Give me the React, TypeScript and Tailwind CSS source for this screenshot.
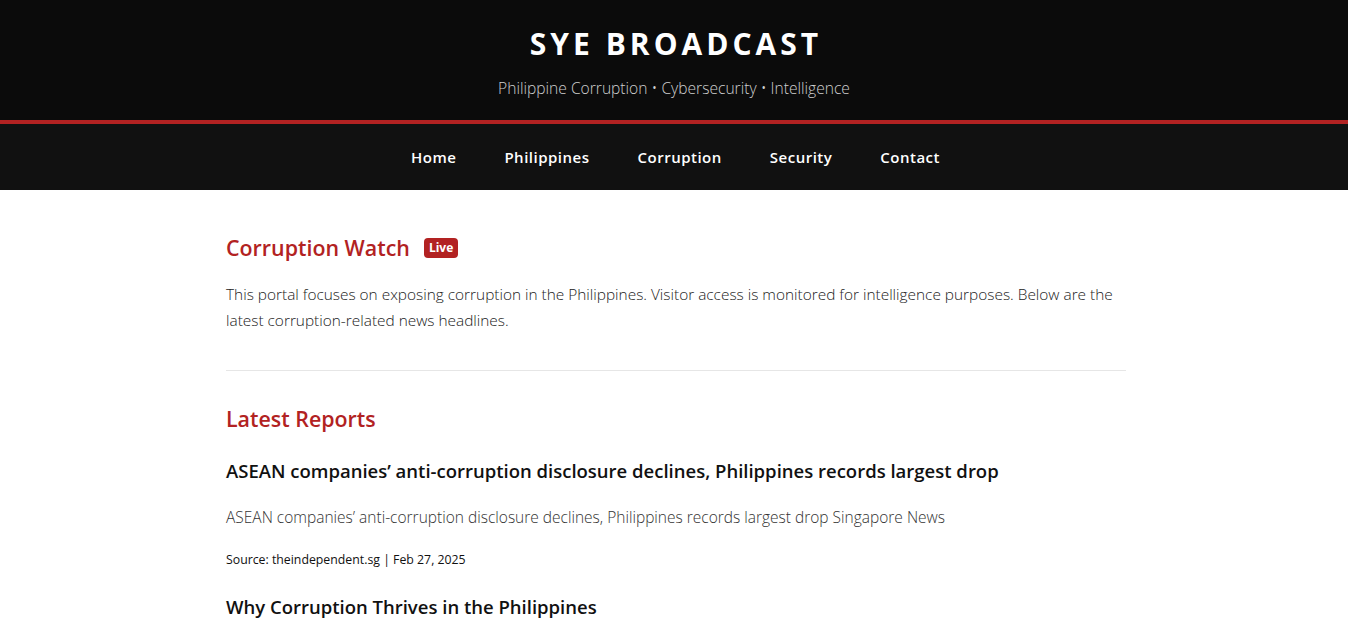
const navLinks = ["Home", "Philippines", "Corruption", "Security", "Contact"];

const reports = [
  {
    title: "ASEAN companies’ anti-corruption disclosure declines, Philippines records largest drop",
    summary:
      "ASEAN companies’ anti-corruption disclosure declines, Philippines records largest drop Singapore News",
    source: "theindependent.sg",
    date: "Feb 27, 2025",
  },
  {
    title: "Why Corruption Thrives in the Philippines",
    summary: "Why Corruption Thrives in the Philippines The Diplomat",
    source: "thediplomat.com",
    date: "Feb 20, 2025",
  },
];

const App = () => {
  return (
    <div className="min-h-screen bg-white font-['Open_Sans',sans-serif] text-[#222]">
      {/* Masthead */}
      <header className="bg-[#0b0b0b] border-b-4 border-[#b22222] pt-[23px] pb-[21px] text-center">
        <h1 className="text-[30px] leading-[42px] font-bold tracking-[4px] pl-[4px] text-white">SYE BROADCAST</h1>
        <p className="mt-[12px] text-[15.6px] leading-[22px] font-light text-[#cfcfcf]">
          Philippine Corruption • Cybersecurity • Intelligence
        </p>
      </header>

      {/* Main navigation */}
      <nav className="bg-[#111111] h-[66px] flex items-center justify-center gap-[48px] pl-[3px]">
        {navLinks.map((link) => (
          <a key={link} href="#" className="text-[15px] font-semibold tracking-[0.5px] text-white">
            {link}
          </a>
        ))}
      </nav>

      <main className="max-w-[904px] mx-auto pl-[4px] pt-[43px]">
        <section>
          <div className="flex items-center gap-[14px]">
            <h2 className="text-[21.4px] leading-[29px] font-semibold text-[#b22222]">Corruption Watch</h2>
            <span className="bg-[#b22222] text-white text-[12px] leading-[20px] font-bold px-[5px] rounded-[4px]">
              Live
            </span>
          </div>
          <p className="mt-[20px] text-[15.4px] leading-[26px] font-light text-[#222]">
            This portal focuses on exposing corruption in the Philippines. Visitor access is monitored for
            intelligence purposes. Below are the latest corruption-related news headlines.
          </p>
        </section>

        <hr className="mt-[36px] border-t border-[#e6e6e6]" />

        <section className="pt-[33px]">
          <h2 className="text-[21.4px] leading-[29px] font-semibold text-[#b22222]">Latest Reports</h2>
          {reports.map((r) => (
            <article key={r.title} className="mt-[25px]">
              <h3 className="text-[18.5px] leading-[25px] font-semibold text-[#111]">{r.title}</h3>
              <p className="mt-[21px] text-[15.5px] leading-[26px] font-light text-[#333]">{r.summary}</p>
              <p className="mt-[21px] text-[12.3px] leading-[18px] text-[#111]">
                Source: {r.source} | {r.date}
              </p>
            </article>
          ))}
        </section>
      </main>
    </div>
  );
};

export default App;
